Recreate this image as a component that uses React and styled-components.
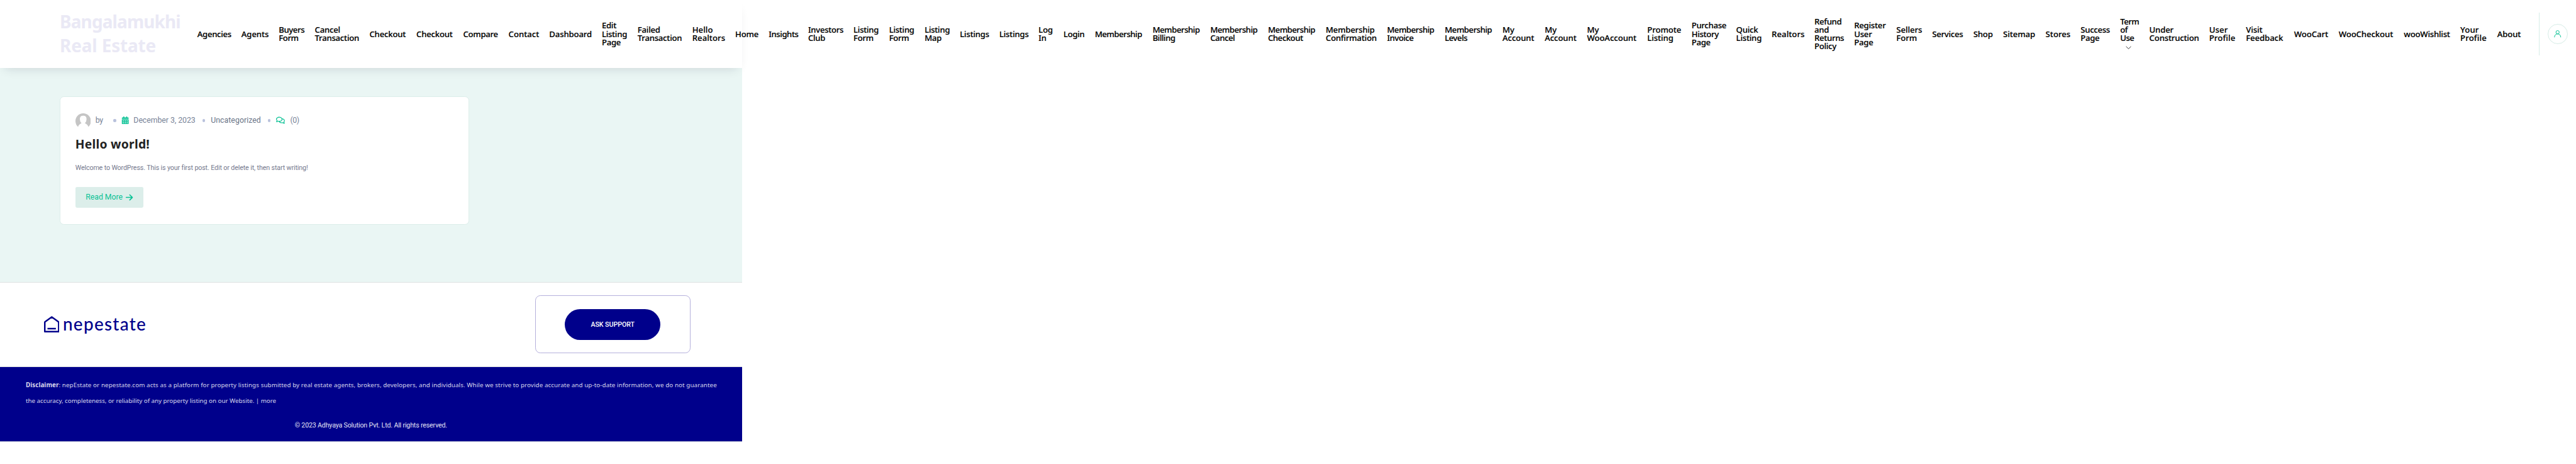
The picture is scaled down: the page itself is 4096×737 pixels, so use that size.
import React, { useLayoutEffect, useRef, useState } from "react";
import styled, { createGlobalStyle } from "styled-components";
import { FaCalendarAlt, FaRegComments } from "react-icons/fa";
import { FaArrowRight } from "react-icons/fa6";

const Global = createGlobalStyle`
  *, *::before, *::after { box-sizing: border-box; }
  html, body { margin: 0; background: #fff; overflow: hidden; }
  p, h1, h2 { margin: 0; }
`;

const Page = styled.div`
  zoom: 0.81936;
  width: 4999px;
  height: 899px;
  overflow: hidden;
  background: #fff;
  font-family: Roboto, "Liberation Sans", sans-serif;
`;

const Header = styled.header`
  position: relative;
  width: 1440px;
  height: 132px;
  display: flex;
  align-items: center;
  padding-left: 116px;
  background: #fff;
  box-shadow: 0 10px 20px -10px rgba(18, 18, 50, 0.16);
`;

const Brand = styled.h1`
  flex: none;
  width: 267px;
  font: 700 34px/46px "Noto Sans", sans-serif;
  color: #eae9f5;
`;

const Nav = styled.nav`
  flex: none;
  display: flex;
  align-items: center;
`;

const NavItem = styled.a`
  flex: none;
  width: ${(p) => p.$w}px;
  font: 500 16px/16px "Noto Sans", sans-serif;
  color: #000;
  -webkit-text-stroke: 0.25px #000;
`;

const Chevron = styled.svg`
  display: block;
  width: 11px;
  height: 16px;
  margin-left: 11px;
`;

const Account = styled.div`
  flex: none;
  height: 83px;
  display: flex;
  align-items: center;
  margin-left: 4px;
  padding-left: 15px;
  border-left: 1px solid #d6ece6;
`;

const AccountButton = styled.div`
  width: 40px;
  height: 40px;
  display: grid;
  place-items: center;
  border: 1px solid #d6ece6;
  border-radius: 50%;
`;

const Main = styled.main`
  width: 1440px;
  height: 415px;
  padding: 55px 0 0 116px;
  background: #eaf6f4;
`;

const Card = styled.article`
  width: 795px;
  height: 249px;
  padding: 30px 29px;
  border: 1px solid #dceeea;
  border-radius: 8px;
  background: #fff;
`;

const Meta = styled.div`
  display: flex;
  align-items: center;
  height: 30px;
  font-size: 15px;
  line-height: 30px;
  color: #778397;
`;

const Cell = styled.div`
  flex: none;
  display: flex;
  align-items: center;
  width: ${(p) => p.$w}px;
  color: ${(p) => p.$color || "inherit"};
`;

const Dot = styled.i`
  width: 5px;
  height: 5px;
  margin-top: 1px;
  border-radius: 50%;
  background: #b9c1dc;
`;

const CalendarIcon = styled(FaCalendarAlt)`
  margin-left: -1px;
`;

const Title = styled.h2`
  margin-top: 16px;
  font: 700 23.5px/32px "Noto Sans", sans-serif;
  color: #222;
`;

const Excerpt = styled.p`
  margin-top: 15px;
  font-size: 13px;
  line-height: 30px;
  color: #74788d;
`;

const ReadMore = styled.a`
  width: 132px;
  height: 40px;
  margin-top: 21px;
  padding-left: 20px;
  display: flex;
  align-items: center;
  border-radius: 3px;
  background: #dceeea;
  color: #0ac295;
  font-size: 15px;
`;

const Support = styled.section`
  width: 1440px;
  height: 164px;
  display: flex;
  align-items: center;
  justify-content: space-between;
  padding: 0 100px 0 85px;
  border: solid #dfe3e3;
  border-width: 1px 0;
`;

const Logo = styled.div`
  display: flex;
  align-items: center;
  height: 40px;
  gap: 7px;
  color: #00008b;
  font: 500 34px/40px Lato, sans-serif;
`;

const SupportBox = styled.div`
  width: 302px;
  height: 112px;
  display: grid;
  place-items: center;
  border: 1px solid #b5b0dc;
  border-radius: 10px;
`;

const SupportButton = styled.a`
  width: 185px;
  height: 60px;
  display: grid;
  place-items: center;
  border-radius: 30px;
  background: #00008b;
  color: #fff;
  font-size: 13px;
  font-weight: 500;
`;

const Legal = styled.footer`
  width: 1440px;
  height: 146px;
  padding: 20px 50px 0;
  border-bottom: 1px solid #dfe3e3;
  background: #00008b;
  color: #e4e4f4;
`;

const Disclaimer = styled.p`
  font: 400 12px/30px "Noto Sans", sans-serif;
  color: #d6d6ec;
`;

const Copyright = styled.p`
  margin-top: 20px;
  padding-left: 522px;
  font-size: 13px;
  line-height: 30px;
`;

const Line = styled.span`
  display: block;
  width: ${(p) => p.$w}px;
  white-space: nowrap;
`;

/* Tracks a run of text so that it fills the given measure. */
function Fit({ w, children }) {
  const box = useRef(null);
  const run = useRef(null);
  const [track, setTrack] = useState(0);
  useLayoutEffect(() => {
    const unit = box.current.getBoundingClientRect().width / w;
    const natural = run.current.getBoundingClientRect().width / unit;
    setTrack((w - natural) / (run.current.textContent.length - 1));
  }, [w]);
  return (
    <Line ref={box} $w={w}>
      <span ref={run} style={{ letterSpacing: track }}>{children}</span>
    </Line>
  );
}

/* Label (one entry per line), left edge, width of the widest line. */
const ITEMS = [
  ["Agencies", 383, 66], ["Agents", 468.5, 53], ["Buyers|Form", 541, 50],
  ["Cancel|Transaction", 611, 86], ["Checkout", 717, 70.5], ["Checkout", 808, 70.5],
  ["Compare", 899, 67.5], ["Contact", 987, 59.5], ["Dashboard", 1066, 82.5],
  ["Edit|Listing|Page", 1168, 49], ["Failed|Transaction", 1237.5, 86],
  ["Hello|Realtors", 1343.5, 64], ["Home", 1427, 45], ["Insights", 1492, 57.5],
  ["Investors|Club", 1568.5, 68.5], ["Listing|Form", 1656.5, 49],
  ["Listing|Form", 1725.5, 49], ["Listing|Map", 1794.5, 49], ["Listings", 1863, 57],
  ["Listings", 1939.5, 57], ["Log|In", 2015.5, 28], ["Login", 2064, 41],
  ["Membership", 2125, 91.5], ["Membership|Billing", 2237, 91.5],
  ["Membership|Cancel", 2349, 91.5], ["Membership|Checkout", 2461, 91.5],
  ["Membership|Confirmation", 2573, 99], ["Membership|Invoice", 2692, 91.5],
  ["Membership|Levels", 2804, 91.5], ["My|Account", 2916, 61.5],
  ["My|Account", 2998, 61.5], ["My|WooAccount", 3080, 96], ["Promote|Listing", 3197, 66],
  ["Purchase|History|Page", 3283, 67.5], ["Quick|Listing", 3369.5, 49.5],
  ["Realtors", 3438.5, 64], ["Refund|and|Returns|Policy", 3521.5, 57.5],
  ["Register|User|Page", 3598.5, 61.5], ["Sellers|Form", 3680.5, 50],
  ["Services", 3750, 60], ["Shop", 3830, 37.5], ["Sitemap", 3887.5, 62.5],
  ["Stores", 3970, 48.5], ["Success|Page", 4038, 57], ["Term|of|Use", 4115, 36.5],
  ["Under|Construction", 4171.5, 96.5], ["User|Profile", 4287.5, 51],
  ["Visit|Feedback", 4359, 72], ["WooCart", 4452.5, 66], ["WooCheckout", 4539, 105.5],
  ["wooWishlist", 4665.5, 89.5], ["Your|Profile", 4775, 51], ["About", 4846.5, 46],
];
const NAV_END = 4924;

function Label({ text, w }) {
  const run = useRef(null);
  const box = useRef(null);
  const [track, setTrack] = useState(0);
  useLayoutEffect(() => {
    const unit = box.current.getBoundingClientRect().width / w;
    const runs = [...run.current.children].map((el) => ({
      width: el.firstChild.getBoundingClientRect().width / unit,
      chars: el.textContent.length,
    }));
    const widest = runs.reduce((a, b) => (b.width > a.width ? b : a));
    setTrack((w - widest.width) / widest.chars);
  }, [w]);
  return (
    <Line ref={box} $w={w}>
      <span ref={run} style={{ letterSpacing: track }}>
        {text.split("|").map((t) => (
          <Line key={t} $w={w}><span>{t}</span></Line>
        ))}
      </span>
    </Line>
  );
}

export default function App() {
  return (
    <Page>
      <Global />
      <Header>
        <Brand>
          <Fit w={235}>Bangalamukhi</Fit>
          <Fit w={187}>Real Estate</Fit>
        </Brand>
        <Nav>
          {ITEMS.map(([text, x, w], i) => {
            const next = i + 1 < ITEMS.length ? ITEMS[i + 1][1] : NAV_END;
            return (
              <NavItem key={i} $w={next - x}>
                <Label text={text} w={w} />
                {text.startsWith("Term") && (
                  <Chevron viewBox="0 0 11 16" fill="none" stroke="#111">
                    <path d="M0.7 8.2 5.5 13 10.3 8.2" />
                  </Chevron>
                )}
              </NavItem>
            );
          })}
        </Nav>
        <Account>
          <AccountButton>
            <svg width="14" height="14" viewBox="0 0 14 14" fill="none" stroke="#0ac295" strokeWidth="1.2">
              <circle cx="7" cy="3.9" r="3.2" />
              <path d="M.9 13.800C.9 9.800 3.300 7.200 7 7.200s6.100 2.600 6.100 6.600" />
            </svg>
          </AccountButton>
        </Account>
      </Header>
      <Main>
        <Card>
          <Meta>
            <Cell $w={39}>
              <svg width="30" height="30" viewBox="0 0 30 30">
                <path fill="#c5c5c5" d="M5 27.500A15 15 0 1 1 25 27.500Q23.500 22.500 18.300 20.500Q21.500 17.500 21.500 12.500Q21.500 5.800 15 5.800T8.500 12.500Q8.500 17.500 11.700 20.500Q6.500 22.500 5 27.500Z" />
              </svg>
            </Cell>
            <Cell $w={35}><Fit w={15}>by</Fit></Cell>
            <Cell $w={16}><Dot /></Cell>
            <Cell $w={23} $color="#0ac295"><CalendarIcon size={15} /></Cell>
            <Cell $w={134}><Fit w={120}>December 3, 2023</Fit></Cell>
            <Cell $w={16}><Dot /></Cell>
            <Cell $w={111} $color="#697386"><Fit w={97}>Uncategorized</Fit></Cell>
            <Cell $w={16}><Dot /></Cell>
            <Cell $w={27} $color="#0ac295"><FaRegComments size={17} /></Cell>
            <Cell $w={20}><Fit w={18}>(0)</Fit></Cell>
          </Meta>
          <Title><Fit w={144}>Hello world!</Fit></Title>
          <Excerpt><Fit w={451}>Welcome to WordPress. This is your first post. Edit or delete it, then start writing!</Fit></Excerpt>
          <ReadMore>
            <Cell $w={77}><Fit w={72}>Read More</Fit></Cell>
            <FaArrowRight size={16} />
          </ReadMore>
        </Card>
      </Main>
      <Support>
        <Logo>
          <svg width="30" height="32" viewBox="0 0 30 32" fill="none" stroke="#00008b" strokeWidth="3">
            <path strokeLinejoin="round" d="M1.500 11.500 15 1.800 28.500 11.500V30.300H1.500Z" />
            <path d="M6.700 24.400H23" />
          </svg>
          <Fit w={161}>nepestate</Fit>
        </Logo>
        <SupportBox>
          <SupportButton><Fit w={85}>ASK SUPPORT</Fit></SupportButton>
        </SupportBox>
      </Support>
      <Legal>
        <Disclaimer>
          <Fit w={1341}><b>Disclaimer</b>: nepEstate or nepestate.com acts as a platform for property listings submitted by real estate agents, brokers, developers, and individuals. While we strive to provide accurate and up-to-date information, we do not guarantee</Fit>
          <Fit w={486}>the accuracy, completeness, or reliability of any property listing on our Website. | more</Fit>
        </Disclaimer>
        <Copyright><Fit w={296}>© 2023 Adhyaya Solution Pvt. Ltd. All rights reserved.</Fit></Copyright>
      </Legal>
    </Page>
  );
}
